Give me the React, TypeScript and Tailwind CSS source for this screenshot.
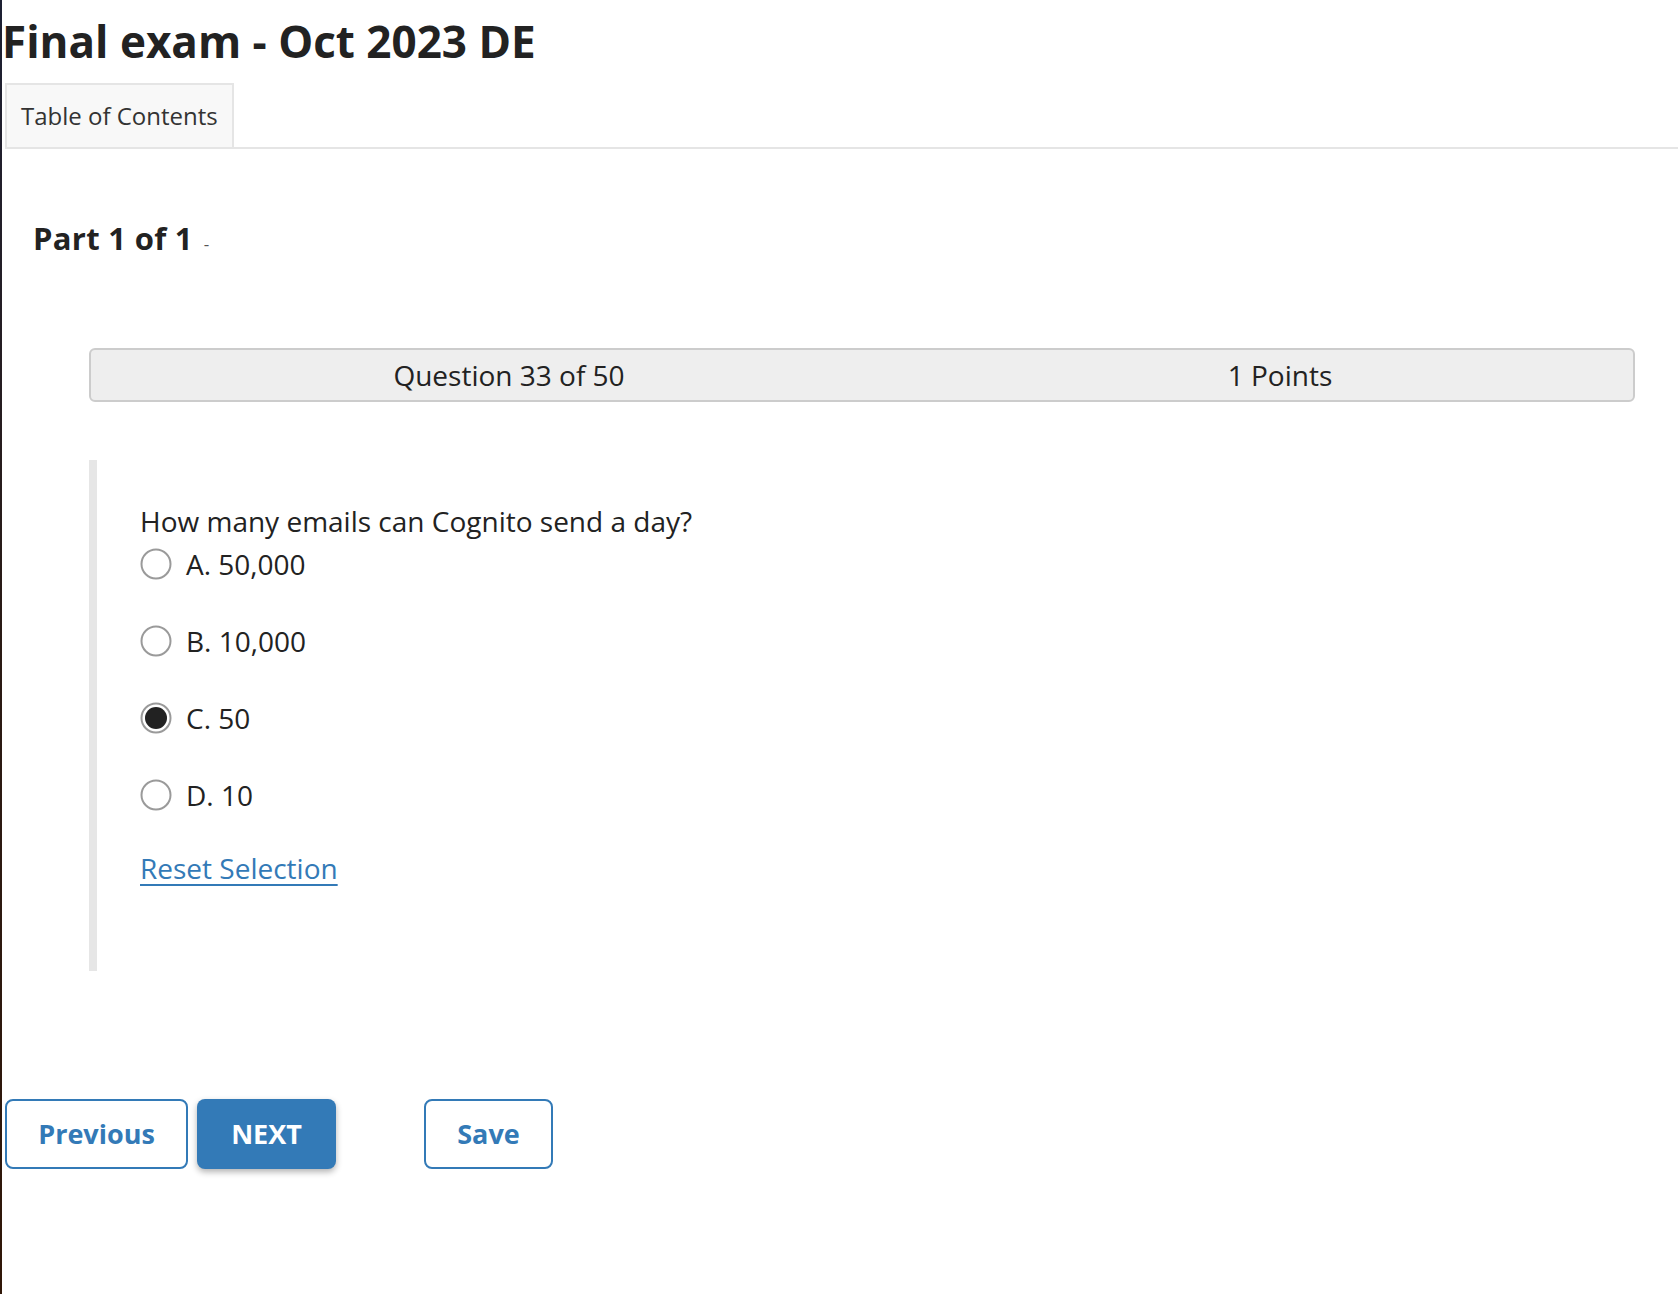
import React, { useState } from "react";

const options = [
  { key: "A", label: "A. 50,000" },
  { key: "B", label: "B. 10,000" },
  { key: "C", label: "C. 50" },
  { key: "D", label: "D. 10" },
];

const Radio = ({ checked }: { checked: boolean }) => (
  <svg width="32" height="32" viewBox="0 0 32 32" className="shrink-0">
    <circle cx="16" cy="16" r="14.5" fill="#fff" stroke="#9a9a9a" strokeWidth="2" />
    {checked && <circle cx="16" cy="16" r="11" fill="#222" />}
  </svg>
);

export default function App() {
  const [picked, setPicked] = useState<string | null>("C");

  return (
    <div className="flex min-h-[1294px] w-full bg-white text-[#222] font-['Open_Sans',sans-serif]">
      <div className="w-[2px] shrink-0 bg-gradient-to-b from-[#1d2033] via-[#2a1a14] to-[#301708]" />
      <div className="flex-1 min-w-0">
        <h1 className="mt-[11px] text-[44px] leading-[60px] font-bold whitespace-nowrap">
          Final exam - Oct 2023 DE
        </h1>

        <div className="mt-[12px] ml-[3px] flex border-b-2 border-[#e5e5e5]">
          <div className="bg-[#f8f8f8] border-2 border-b-0 border-[#e5e5e5] px-[14px] py-[15px] text-[24px] leading-[32px] text-[#333]">
            Table of Contents
          </div>
        </div>

        <div className="mt-[70px] pl-[31px] flex items-baseline">
          <h2 className="text-[31px] leading-[38px] font-bold tracking-[0.3px]">Part 1 of 1</h2>
          <span className="ml-[11px] text-[17px] text-[#555]">-</span>
        </div>

        <div className="mt-[91px] ml-[87px] mr-[43px] grid grid-cols-[836px_1fr] bg-[#eeeeee] border-2 border-[#cccccc] rounded-[6px] py-[7px] text-[28px] leading-[36px]">
          <div className="text-center">Question 33 of 50</div>
          <div className="text-center">1 Points</div>
        </div>

        <div className="mt-[58px] ml-[87px] mr-[43px] border-l-8 border-[#e6e6e6] pl-[43px] pt-[41px] pb-[83px] text-[28px]">
          <p className="leading-[40px]">How many emails can Cognito send a day?</p>
          <div className="mt-[3px] flex flex-col gap-[37px]">
            {options.map((o) => (
              <label
                key={o.key}
                className="flex items-center gap-[14px] h-[40px] cursor-pointer"
                onClick={() => setPicked(o.key)}
              >
                <Radio checked={picked === o.key} />
                <span className="leading-[40px]">{o.label}</span>
              </label>
            ))}
          </div>
          <button
            className="mt-[33px] block leading-[40px] text-[#337ab7] underline underline-offset-[5px]"
            onClick={() => setPicked(null)}
          >
            Reset Selection
          </button>
        </div>

        <div className="mt-[128px] ml-[3px] flex items-center text-[27px] font-bold">
          <button className="h-[70px] w-[183px] rounded-[8px] border-2 border-[#337ab7] bg-white text-[#337ab7]">
            Previous
          </button>
          <button className="ml-[9px] h-[70px] w-[139px] rounded-[8px] bg-[#337ab7] text-white shadow-[0_3px_6px_rgba(0,0,0,0.3)]">
            NEXT
          </button>
          <button className="ml-[88px] h-[70px] w-[129px] rounded-[8px] border-2 border-[#337ab7] bg-white text-[#337ab7]">
            Save
          </button>
        </div>
      </div>
    </div>
  );
}
